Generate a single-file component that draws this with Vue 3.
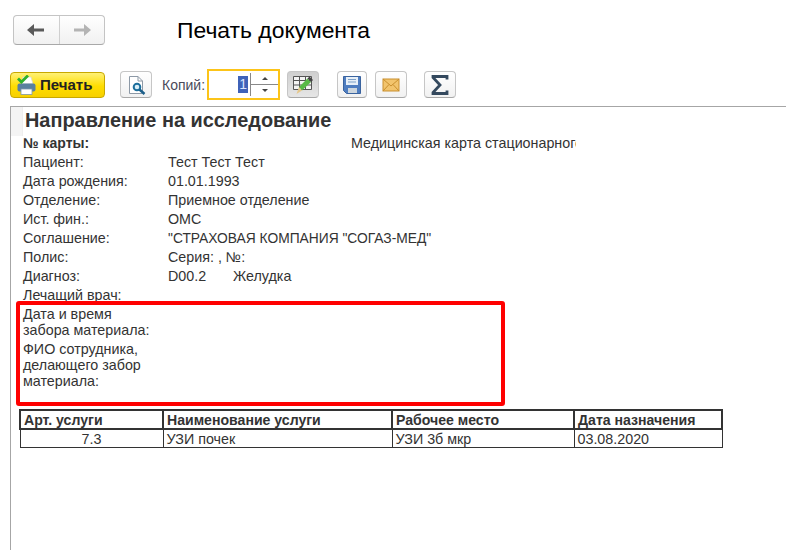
<script setup>
// строки шапки направления
const rows = [
  { label: "Пациент:", value: "Тест Тест Тест" },
  { label: "Дата рождения:", value: "01.01.1993" },
  { label: "Отделение:", value: "Приемное отделение" },
  { label: "Ист. фин.:", value: "ОМС" },
  { label: "Соглашение:", value: '"СТРАХОВАЯ КОМПАНИЯ "СОГАЗ-МЕД"', caps: true },
  { label: "Полис:", value: "Серия: , №:" },
];
</script>

<template>
  <div class="page">
    <div class="head">
      <div class="nav">
        <button class="nav-btn">
          <svg width="18" height="12" viewBox="0 0 18 12"><path d="M0 6 7 0V4.500H17V7.500H7V12Z" fill="#5a5a5a" /></svg>
        </button>
        <button class="nav-btn">
          <svg width="18" height="12" viewBox="0 0 18 12"><path d="M18 6 11 0V4.500H1V7.500H11V12Z" fill="#b4b4b4" /></svg>
        </button>
      </div>
      <div class="title">Печать документа</div>
    </div>

    <div class="toolbar">
      <button class="print">
        <svg width="19" height="20" viewBox="0 0 19 20">
          <path d="M6 2H14L16 9H4Z" fill="#fff" stroke="#d8d8c8" stroke-width="0.800" />
          <rect x="0.500" y="8.500" width="18" height="8" rx="2" fill="#59809f" />
          <rect x="4" y="14" width="11" height="5.500" fill="#fff" stroke="#7d97aa" stroke-width="0.800" />
          <path d="M1 3.500 4.500 7 11 0.500" fill="none" stroke="#2fb12a" stroke-width="2.800" />
        </svg>
        <span>Печать</span>
      </button>
      <button class="tool preview">
        <svg width="20" height="20" viewBox="0 0 20 20">
          <path d="M3.500 1.500H12L16.500 6V18.500H3.500Z" fill="#fff" stroke="#8d99a6" />
          <path d="M12 1.500V6H16.500" fill="none" stroke="#8d99a6" />
          <circle cx="11" cy="12" r="3.300" fill="#d8eef8" stroke="#1c6e9c" stroke-width="2" />
          <path d="M13.500 14.500 18.500 19" stroke="#1c5f8a" stroke-width="2.500" />
        </svg>
      </button>
      <span class="copies">Копий:</span>
      <div class="spin">
        <span class="spin-val"><span class="sel">1</span></span>
        <div class="spin-arrows">
          <span class="up"></span>
          <span class="down"></span>
        </div>
      </div>
      <button class="tool pressed">
        <svg width="22" height="20" viewBox="0 0 22 20">
          <path d="M1.500 1.500H19.500V14.500H1.500ZM1.500 5.500H19.500M1.500 10H19.500M7.500 1.500V14.500M13.500 1.500V14.500" fill="#f4f4f4" stroke="#555" />
          <path d="M7 12 15.500 3.500 19 7 10 15.500Z" fill="#58b947" />
          <path d="M15.500 3.500 17.500 1.500 21 5 19 7Z" fill="#444" />
          <path d="M4.500 19 7 12 10 15.500Z" fill="#e6c88c" />
        </svg>
      </button>
      <button class="tool save">
        <svg width="18" height="18" viewBox="0 0 18 18">
          <path d="M0.500 0.500H17.500V17.500H3.500L0.500 14.500Z" fill="#4f7dc0" stroke="#3a639e" />
          <rect x="3" y="1" width="12" height="8" fill="#e8f0f8" />
          <path d="M5 3.500H13M5 6H13" stroke="#7da0c8" />
          <rect x="5" y="12" width="9" height="5" fill="#cdd6de" />
        </svg>
      </button>
      <button class="tool mail">
        <svg width="18" height="14" viewBox="0 0 18 14">
          <rect x="1" y="1" width="16" height="12" fill="#f2c46d" stroke="#c98f2e" />
          <path d="M1 1 9 8 17 1M1 13 7 6.500M17 13 11 6.500" fill="none" stroke="#c98f2e" />
        </svg>
      </button>
      <button class="tool sigma">
        <svg width="18" height="20" viewBox="0 0 18 20">
          <path d="M16 4.500V1.500H2V2.500L9 10 2 17.500V18.500H16V15.500" fill="none" stroke="#34495e" stroke-width="2.800" />
        </svg>
      </button>
    </div>

    <div class="doc">
      <div class="corner"></div>
      <div class="report">
        <h1>Направление на исследование</h1>
        <div class="row bold-row">
          <b class="lbl">№ карты:</b>
          <span class="card-type">Медицинская карта стационарного больного</span>
        </div>
        <div v-for="r in rows" :key="r.label" class="row">
          <span class="lbl">{{ r.label }}</span>
          <span :class="{ caps: r.caps }">{{ r.value }}</span>
        </div>
        <div class="row">
          <span class="lbl">Диагноз:</span>
          <span class="code">D00.2</span>
          <span>Желудка</span>
        </div>
        <div class="row">
          <span class="lbl">Лечащий врач:</span>
        </div>
        <div class="block first">Дата и время<br />забора материала:</div>
        <div class="block">ФИО сотрудника,<br />делающего забор<br />материала:</div>
        <div class="mark"></div>

        <table>
          <thead>
            <tr>
              <th class="c1">Арт. услуги</th>
              <th class="c2">Наименование услуги</th>
              <th class="c3">Рабочее место</th>
              <th class="c4">Дата назначения</th>
            </tr>
          </thead>
          <tbody>
            <tr>
              <td class="center">7.3</td>
              <td>УЗИ почек</td>
              <td>УЗИ 3б мкр</td>
              <td>03.08.2020</td>
            </tr>
          </tbody>
        </table>
      </div>
    </div>
  </div>
</template>

<style>
html,
body {
  background: #fff;
  overflow: hidden;
}
</style>

<style scoped>
.page {
  width: 786px;
  height: 550px;
  overflow: hidden;
  font-family: "Liberation Sans", Arial, sans-serif;
  color: #333;
  background: #fff;
}
button {
  padding: 0;
  margin: 0;
  font-family: inherit;
  display: flex;
  align-items: center;
  justify-content: center;
}
.head {
  display: flex;
  align-items: center;
  height: 30px;
  padding: 15px 0 0 13px;
}
.nav {
  display: flex;
  width: 92px;
  height: 30px;
  box-sizing: border-box;
  border: 1px solid #c4c4c4;
  border-bottom-color: #a8a8a8;
  border-radius: 4px;
  background: linear-gradient(#fff, #f1f1f1);
}
.nav-btn {
  flex: 1;
  border: 0;
  background: none;
}
.nav-btn + .nav-btn {
  border-left: 1px solid #cfcfcf;
}
.title {
  margin-left: 72px;
  font-size: 22.9px;
  color: #000;
}
.toolbar {
  display: flex;
  align-items: center;
  height: 31px;
  margin-top: 24px;
  padding-left: 10px;
}
.print {
  width: 95px;
  height: 26px;
  box-sizing: border-box;
  justify-content: flex-start;
  gap: 4px;
  padding-left: 6px;
  border: 1px solid #c8a800;
  border-radius: 4px;
  background: linear-gradient(#fff176, #ffdd00 55%, #f7d000);
  font-size: 15px;
  font-weight: bold;
  color: #222;
}
.tool {
  width: 32px;
  height: 27px;
  box-sizing: border-box;
  border: 1px solid #c6c6c6;
  border-bottom-color: #a8a8a8;
  border-radius: 4px;
  background: linear-gradient(#fff, #f1f1f1);
}
.preview {
  margin-left: 15px;
}
.copies {
  margin-left: 10px;
  width: 45px;
  font-size: 14px;
  color: #4a4a5a;
}
.spin {
  display: flex;
  width: 73px;
  height: 31px;
  box-sizing: border-box;
  border: 2px solid #fcc419;
  background: #fff;
}
.spin-val {
  flex: 1;
  display: flex;
  align-items: center;
  justify-content: flex-end;
  font-size: 14px;
  padding-right: 2px;
}
.sel {
  background: #3f62b8;
  color: #d8e4ff;
  padding: 0 1px;
  line-height: 17px;
}
.spin-arrows {
  width: 27px;
  display: flex;
  flex-direction: column;
  justify-content: space-between;
  align-items: center;
  border-left: 1px solid #888;
  margin: 2px 0;
  padding: 4px 0;
  background: linear-gradient(#888, #888) center / 100% 1px no-repeat;
}
.up,
.down {
  width: 0;
  height: 0;
  border: 3px solid transparent;
}
.up {
  border-top: 0;
  border-bottom: 3px solid #444;
}
.down {
  border-bottom: 0;
  border-top: 3px solid #444;
}
.pressed {
  margin-left: 7px;
  background: linear-gradient(#cfcfcf, #e6e6e6);
}
.save {
  margin-left: 18px;
  width: 30px;
}
.mail {
  margin-left: 8px;
}
.sigma {
  margin-left: 17px;
}
.doc {
  position: relative;
  margin: 6px 0 0 10px;
  height: 450px;
  border-top: 1px solid #a6a6a6;
  border-left: 1px solid #a6a6a6;
}
.corner {
  position: absolute;
  left: 0;
  top: 0;
  width: 11px;
  height: 29px;
  background: #f4f4f4;
  border-right: 1px solid #eee;
}
.report {
  position: relative;
  padding-left: 12px;
  font-size: 14.3px;
  line-height: 19px;
}
h1 {
  margin: 0 0 0 2px;
  font-size: 19.9px;
  line-height: 27px;
  font-weight: bold;
  color: #333;
}
.row {
  display: flex;
  height: 19px;
  white-space: nowrap;
}
.lbl {
  width: 145px;
  flex: none;
}
.bold-row .lbl {
  width: 328px;
  font-size: 14px;
}
.card-type {
  width: 225px;
  overflow: hidden;
}
.caps {
  font-size: 13.8px;
}
.code {
  width: 65px;
}
.block {
  line-height: 16px;
  margin-bottom: 3px;
}
.first {
  margin-top: 1px;
}
.mark {
  position: absolute;
  left: 5px;
  top: 194px;
  width: 489px;
  height: 105px;
  box-sizing: border-box;
  border: 4px solid #f00;
  border-radius: 3px;
}
table {
  margin: 20px 0 0 -4px;
  width: 704px;
  border-collapse: collapse;
  table-layout: fixed;
  font-size: 14.3px;
}
th,
td {
  height: 17px;
  padding: 0 0 0 3px;
  text-align: left;
  line-height: 16px;
  border: 1px solid #333;
}
th {
  border-width: 2px;
  font-weight: bold;
  font-size: 14.1px;
}
.c1 {
  width: 138px;
}
.c2 {
  width: 224px;
}
.c3 {
  width: 177px;
}
.center {
  text-align: center;
  padding: 0;
}
</style>
